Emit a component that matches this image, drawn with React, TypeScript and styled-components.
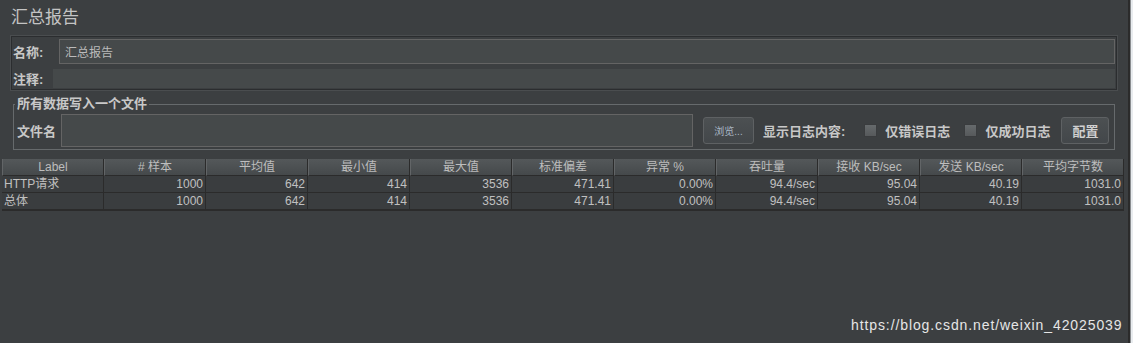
import React from 'react';
import styled, { createGlobalStyle } from 'styled-components';

const GlobalStyle = createGlobalStyle`
  html, body {
    margin: 0;
    padding: 0;
    background: #3c3f41;
  }
  body {
    font-family: 'Liberation Sans', 'Noto Sans CJK SC', sans-serif;
    color: #bbbbbb;
  }
`;

const CJK = `'Liberation Sans', 'Noto Sans CJK SC', sans-serif`;

const Screen = styled.div`
  display: flex;
  width: 1133px;
  height: 343px;
  overflow: hidden;
`;

const Main = styled.div`
  position: relative;
  flex: 1;
  display: flex;
  flex-direction: column;
  background: #3c3f41;
  border-right: 2px solid #2b2b2b;
`;

const SideStrip = styled.div`
  width: 5px;
  background: #e9ecef;
  border-left: 1px solid #8a8d90;
`;

const Title = styled.div`
  font-family: ${CJK};
  font-size: 17px;
  line-height: 20px;
  padding: 8px 0 0 11px;
  height: 28px;
  color: #c4c4c4;
`;

const NameBox = styled.div`
  margin: 0 11px 0 11px;
  padding: 2px 1px 1px 0;
  border: 1px solid #2b2d2f;
  box-shadow: 0 0 0 1px #4a4d4f;
  display: flex;
  flex-direction: column;
`;

const Row = styled.div<{ $h: number; $top?: number }>`
  display: flex;
  align-items: center;
  height: ${(p) => p.$h}px;
  margin-top: ${(p) => p.$top ?? 0}px;
`;

const Label = styled.span<{ $w?: number }>`
  font-family: ${CJK};
  font-weight: bold;
  font-size: 13px;
  color: #c8c8c8;
  white-space: nowrap;
  width: ${(p) => (p.$w ? `${p.$w}px` : 'auto')};
  padding-left: 1px;
  flex-shrink: 0;
`;

const Input = styled.div<{ $bordered?: boolean }>`
  flex: 1;
  align-self: stretch;
  background: #45494a;
  border: 1px solid ${(p) => (p.$bordered ? '#646464' : '#45494a')};
  font-family: ${CJK};
  font-size: 12px;
  color: #bbbbbb;
  display: flex;
  align-items: center;
  padding-left: 5px;
`;

const Field = styled.fieldset`
  margin: 7px 13px 0 13px;
  padding: 3px 5px 2px 2px;
  border: 1px solid #666a6c;
  min-width: 0;
`;

const Legend = styled.legend`
  font-family: ${CJK};
  font-weight: bold;
  font-size: 13px;
  color: #c8c8c8;
  padding: 0 2px 0 2px;
  margin-left: -1px;
  line-height: 14px;
`;

const FileRow = styled.div`
  display: flex;
  align-items: center;
  width: 100%;
  height: 33px;
`;

const FileInput = styled.div`
  width: 630px;
  height: 31px;
  background: #45494a;
  border: 1px solid #646464;
  margin-left: 5px;
`;

const Button = styled.button<{ $small?: boolean }>`
  background: linear-gradient(#4c5052, #43474a);
  border: 1px solid #5e6163;
  border-radius: 3px;
  color: ${(p) => (p.$small ? '#a9b7c6' : '#d0d0d0')};
  font-family: ${CJK};
  font-weight: ${(p) => (p.$small ? 'normal' : 'bold')};
  font-size: ${(p) => (p.$small ? '10px' : '13px')};
  height: 27px;
  padding: 0;
  width: ${(p) => (p.$small ? '51px' : '48px')};
  flex-shrink: 0;
`;

const Check = styled.span`
  display: inline-block;
  width: 11px;
  height: 11px;
  background: linear-gradient(#666a6c, #56595b);
  border: 1px solid #3a3c3e;
  margin: 0 7px 0 1px;
  flex-shrink: 0;
`;

const Table = styled.div`
  margin: 9px 0 0 2px;
  display: grid;
  grid-template-columns: repeat(11, 102px);
  width: 1122px;
  border-bottom: 1px solid #2b2b2b;
`;

const Head = styled.div`
  height: 16px;
  line-height: 16px;
  font-family: ${CJK};
  font-size: 12px;
  color: #bdbdbd;
  text-align: center;
  background: linear-gradient(#54585a, #45494b);
  border-right: 1px solid #2b2b2b;
  border-bottom: 1px solid #2b2b2b;
  border-left: 1px solid #626567;
  white-space: nowrap;
`;

const Cell = styled.div<{ $left?: boolean }>`
  height: 16px;
  line-height: 16px;
  font-family: ${CJK};
  font-size: 12px;
  color: #c0c0c0;
  background: #3a3d3f;
  text-align: ${(p) => (p.$left ? 'left' : 'right')};
  padding: 0 2px 0 2px;
  border-right: 1px solid #2b2b2b;
  border-bottom: 1px solid #2b2b2b;
  white-space: nowrap;
  overflow: hidden;
`;

const Watermark = styled.div`
  position: absolute;
  left: 851px;
  top: 317px;
  font-family: 'Liberation Sans', sans-serif;
  font-size: 14px;
  letter-spacing: 0.9px;
  color: #e6e6e6;
  white-space: nowrap;
`;

const headers = ['Label', '# 样本', '平均值', '最小值', '最大值', '标准偏差', '异常 %', '吞吐量', '接收 KB/sec', '发送 KB/sec', '平均字节数'];

const rows = [
  ['HTTP请求', '1000', '642', '414', '3536', '471.41', '0.00%', '94.4/sec', '95.04', '40.19', '1031.0'],
  ['总体', '1000', '642', '414', '3536', '471.41', '0.00%', '94.4/sec', '95.04', '40.19', '1031.0'],
];

export default function App() {
  return (
    <Screen>
      <GlobalStyle />
      <Main>
        <Title>汇总报告</Title>
        <NameBox>
          <Row $h={25}>
            <Label $w={46}>名称:</Label>
            <Input $bordered>汇总报告</Input>
          </Row>
          <Row $h={19} $top={5}>
            <Label $w={40}>注释:</Label>
            <Input />
          </Row>
        </NameBox>
        <Field>
          <Legend>所有数据写入一个文件</Legend>
          <FileRow>
            <Label>文件名</Label>
            <FileInput />
            <Button $small style={{ marginLeft: 10 }}>浏览...</Button>
            <Label style={{ marginLeft: 8, marginRight: 18 }}>显示日志内容:</Label>
            <Check />
            <Label style={{ marginRight: 13 }}>仅错误日志</Label>
            <Check />
            <Label>仅成功日志</Label>
            <Button style={{ marginLeft: 11 }}>配置</Button>
          </FileRow>
        </Field>
        <Table>
          {headers.map((h) => (
            <Head key={h}>{h}</Head>
          ))}
          {rows.map((r, i) =>
            r.map((c, j) => (
              <Cell key={`${i}-${j}`} $left={j === 0}>
                {c}
              </Cell>
            ))
          )}
        </Table>
        <Watermark>https://blog.csdn.net/weixin_42025039</Watermark>
      </Main>
      <SideStrip />
    </Screen>
  );
}
